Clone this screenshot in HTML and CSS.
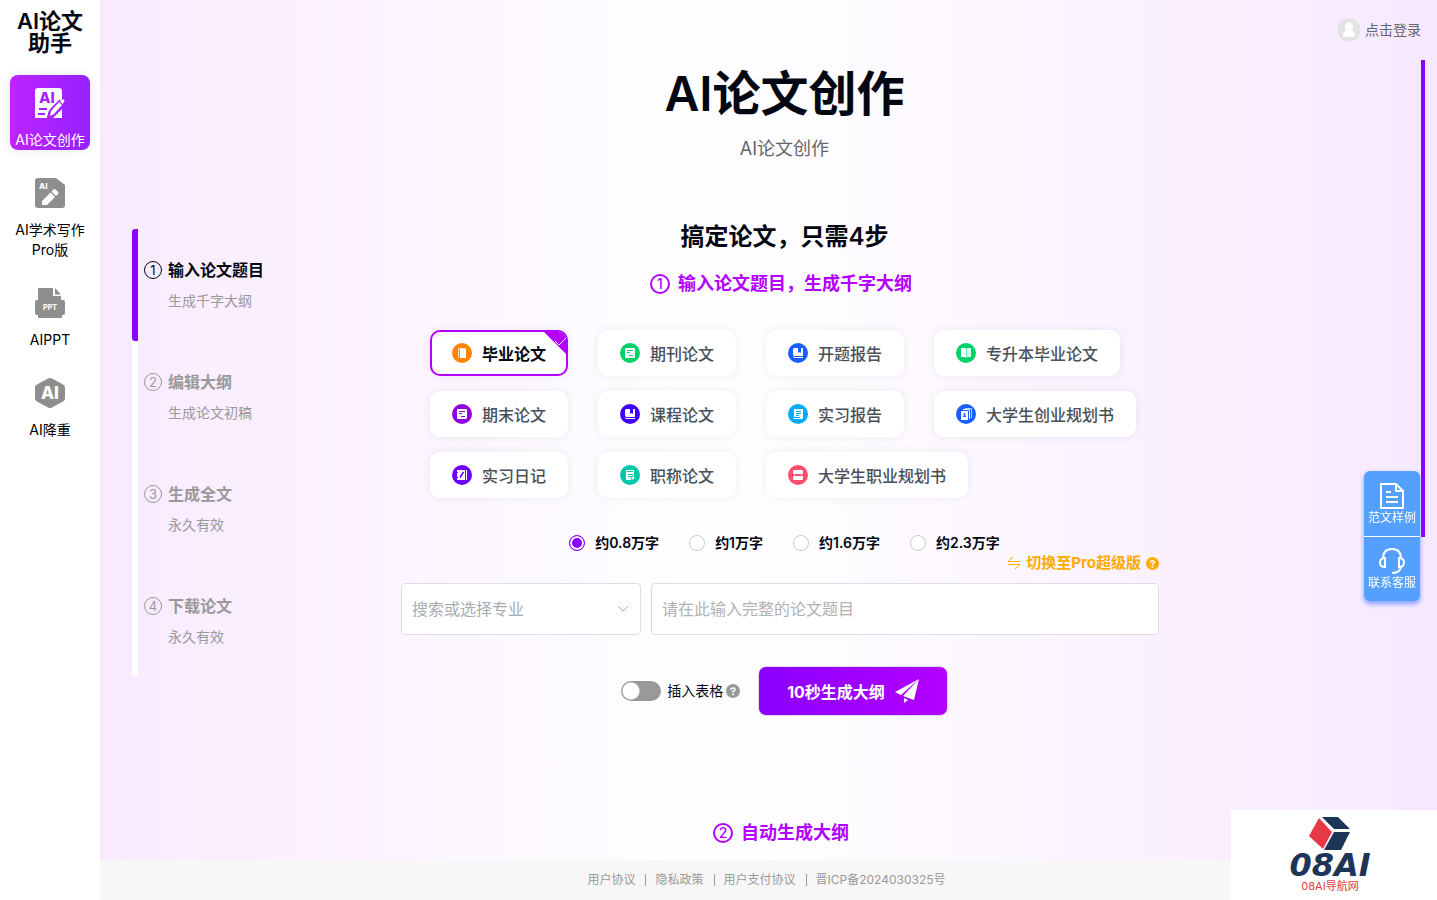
FILE: index.html
```html
<!DOCTYPE html>
<html lang="zh-CN">
<head>
    <meta charset="UTF-8">
    <meta name="viewport" content="width=device-width, initial-scale=1.0">
    <title>AI论文助手</title>
    <link rel="stylesheet" href="styles.css">
</head>
<body>
    <aside class="sidebar">
        <div class="brand">AI论文<br>助手</div>
        <nav class="menu">
            <a class="menu-item active" href="#">
                <svg width="30" height="30" viewBox="0 0 30 30">
                    <path fill="#fff" d="M3 0h21a3 3 0 0 1 3 3v8L14 23l-2 7H0V3a3 3 0 0 1 3-3z"/>
                    <path fill="#fff" d="M24 14l3 3-8 9-4 2 1-5zM25 13l2-1.500q1-.5 2 .5t0 2l-1.500 2zM20 28l7-7v9h-9z"/>
                    <path stroke="#ab22ff" stroke-width="2" d="M4 21h8M3 26h7"/>
                    <path stroke="#ab22ff" stroke-width="1.500" fill="none" d="M13 30c0-5 1-7 4-10l8-8"/>
                    <text x="4" y="15" font-size="15" font-weight="800" fill="#ab22ff">AI</text>
                </svg>
                <span>AI论文创作</span>
            </a>
            <a class="menu-item" href="#">
                <svg width="30" height="30" viewBox="0 0 30 30">
                    <path fill="#8e8e8e" d="M3 0h18l9 7v20q0 3-3 3H3q-3 0-3-3V3q0-3 3-3z"/>
                    <text x="4" y="11" font-size="8" font-weight="800" fill="#fff">AI</text>
                    <path fill="#fff" d="M7 23l8.500-8.500 4.500 4.500-8 8H7zM16.500 13.500l2-2q1-1 2 0l2.500 2.500q1 1 0 2l-2 2z"/>
                </svg>
                <span>AI学术写作<br>Pro版</span>
            </a>
            <a class="menu-item" href="#">
                <svg width="30" height="30" viewBox="0 0 30 30">
                    <path fill="#8e8e8e" d="M4 0h14v8h8v4h2q2 0 2 2v11q0 2-2 2h-1v3H3v-3H2q-2 0-2-2V14q0-2 2-2h1V1q0-1 1-1zM20 0l6 6.500h-6z"/>
                    <text x="15" y="22" font-size="7" font-weight="800" fill="#fff" text-anchor="middle">PPT</text>
                </svg>
                <span>AIPPT</span>
            </a>
            <a class="menu-item" href="#">
                <svg width="30" height="30" viewBox="0 0 30 30">
                    <path fill="#8e8e8e" d="M13 0.5q2-1 4 0l11 6q2 1 2 3v11q0 2-2 3l-11 6q-2 1-4 0l-11-6q-2-1-2-3v-11q0-2 2-3z"/>
                    <text x="15" y="21" font-size="17" font-weight="800" fill="#fff" text-anchor="middle">AI</text>
                </svg>
                <span>AI降重</span>
            </a>
        </nav>
    </aside>

    <div class="page">
        <header class="topbar">
            <a class="login" href="#">
                <svg width="24" height="24" viewBox="0 0 24 24">
                    <circle cx="12" cy="12" r="11.5" fill="#e3e3e3"/>
                    <circle cx="12" cy="8.500" r="4" fill="#fff"/>
                    <path fill="#fff" d="M6 18q0-6 6-6t6 6q0 1-1 1H7q-1 0-1-1z"/>
                </svg>
                <span>点击登录</span>
            </a>
        </header>

        <main class="content">
            <ol class="steps">
                <li class="step current">
                    <span class="num">1</span>
                    <h3>输入论文题目</h3>
                    <p>生成千字大纲</p>
                </li>
                <li class="step">
                    <span class="num">2</span>
                    <h3>编辑大纲</h3>
                    <p>生成论文初稿</p>
                </li>
                <li class="step">
                    <span class="num">3</span>
                    <h3>生成全文</h3>
                    <p>永久有效</p>
                </li>
                <li class="step">
                    <span class="num">4</span>
                    <h3>下载论文</h3>
                    <p>永久有效</p>
                </li>
            </ol>

            <div class="center">
                <h1>AI论文创作</h1>
                <p class="subtitle">AI论文创作</p>
                <h2>搞定论文，只需4步</h2>
                <h3 class="section-title"><span class="num">1</span>输入论文题目，生成千字大纲</h3>

                <div class="types">
                    <button class="type selected" type="button">
                        <svg width="20" height="20" viewBox="0 0 20 20"><circle cx="10" cy="10" r="10" fill="#ff8400"/><path fill="#fff" d="M8 6h6v9H8z"/><path fill="none" stroke="#ffe0bd" d="M6.500 15V5.500H14"/></svg>
                        毕业论文
                        <svg class="tick" width="24" height="24" viewBox="0 0 24 24"><path fill="#b300ff" d="M0 0h24v24z"/><path fill="none" stroke="#fff" d="M12 10l4 4 7-7"/></svg>
                    </button>
                    <button class="type" type="button">
                        <svg width="20" height="20" viewBox="0 0 20 20"><circle cx="10" cy="10" r="10" fill="#00d26a"/><rect x="5" y="5" width="10" height="10" rx="1" fill="#fff"/><path stroke="#00d26a" d="M7 7.500h6M7 9.500h3M9 12.500h4"/></svg>
                        期刊论文
                    </button>
                    <button class="type" type="button">
                        <svg width="20" height="20" viewBox="0 0 20 20"><circle cx="10" cy="10" r="10" fill="#1a5eff"/><path fill="#fff" d="M6 5h4v5l1.500-1 1.500 1V5h2v7H5V6z"/><path fill="none" stroke="#fff" d="M15 12.500H6q-1 1 0 2h9"/></svg>
                        开题报告
                    </button>
                    <button class="type" type="button">
                        <svg width="20" height="20" viewBox="0 0 20 20"><circle cx="10" cy="10" r="10" fill="#00d26a"/><path fill="#fff" d="M5 5h4q1 0 1 1v9q-1-1-2-1H5z"/><path fill="#d9ffeb" d="M10.500 6q0-1 1-1H15v9h-3q-1 0-1.500 1z"/></svg>
                        专升本毕业论文
                    </button>
                    <button class="type" type="button">
                        <svg width="20" height="20" viewBox="0 0 20 20"><circle cx="10" cy="10" r="10" fill="#9100dc"/><rect x="5" y="5" width="10" height="10" rx="1" fill="#fff"/><path stroke="#9100dc" d="M7 7.500h6M7 9.500h3M9 12.500h4"/></svg>
                        期末论文
                    </button>
                    <button class="type" type="button">
                        <svg width="20" height="20" viewBox="0 0 20 20"><circle cx="10" cy="10" r="10" fill="#4200ff"/><path fill="#fff" d="M6 5h4v5l1.500-1 1.500 1V5h2v7H5V6z"/><path fill="none" stroke="#fff" d="M15 12.500H6q-1 1 0 2h9"/></svg>
                        课程论文
                    </button>
                    <button class="type" type="button">
                        <svg width="20" height="20" viewBox="0 0 20 20"><circle cx="10" cy="10" r="10" fill="#00aaff"/><path fill="#fff" d="M6 5h9v9q0 1-1 1H6q-1 0-1-1h1z"/><path stroke="#00aaff" d="M8 7.500h5M8 9.500h5M8 11.500h3M5 13.500h7"/></svg>
                        实习报告
                    </button>
                    <button class="type" type="button">
                        <svg width="20" height="20" viewBox="0 0 20 20"><circle cx="10" cy="10" r="10" fill="#1a5eff"/><path fill="#fff" d="M5 7h7v9H5z"/><path fill="none" stroke="#fff" d="M7 5.500h6.500V15"/><path fill="none" stroke="#b8ceff" d="M9 4.500h6.500V14"/><circle cx="8.500" cy="10" r="1" fill="#1a5eff"/><path fill="#1a5eff" d="M7 13q0-2 1.500-2t1.500 2z"/></svg>
                        大学生创业规划书
                    </button>
                    <button class="type" type="button">
                        <svg width="20" height="20" viewBox="0 0 20 20"><circle cx="10" cy="10" r="10" fill="#6f00ff"/><path fill="#fff" d="M5 5h8v10H5z"/><path stroke="#fff" d="M14.500 5v10"/><path stroke="#6f00ff" stroke-width="1.500" d="M8 12.500l3.500-5.500"/><path stroke="#6f00ff" d="M4 7.500h2M4 12.500h2"/></svg>
                        实习日记
                    </button>
                    <button class="type" type="button">
                        <svg width="20" height="20" viewBox="0 0 20 20"><circle cx="10" cy="10" r="10" fill="#00c7a9"/><path fill="#fff" d="M6 5h8v7l-1 3H6z"/><path stroke="#00c7a9" d="M7 6.500h6M8 9.500h5M8 11.500h3"/><circle cx="13" cy="13" r="2" fill="#fff" stroke="#00c7a9"/></svg>
                        职称论文
                    </button>
                    <button class="type" type="button">
                        <svg width="20" height="20" viewBox="0 0 20 20"><circle cx="10" cy="10" r="10" fill="#ff4d6d"/><rect x="5" y="5" width="10" height="4" rx="1" fill="#fff"/><rect x="5" y="11" width="10" height="4" rx="1" fill="#fff"/><path stroke="#fff" stroke-opacity="0.5" d="M6.500 9v2M13.500 9v2"/></svg>
                        大学生职业规划书
                    </button>
                </div>

                <form class="paper-form">
                    <div class="counts">
                        <label><input type="radio" name="count" checked>约0.8万字</label>
                        <label><input type="radio" name="count">约1万字</label>
                        <label><input type="radio" name="count">约1.6万字</label>
                        <label><input type="radio" name="count">约2.3万字</label>
                    </div>
                    <a class="switch-pro" href="#">
                        <svg width="14" height="14" viewBox="0 0 14 14"><path fill="none" stroke="#ffab00" d="M6 1L1 5.500h12M1 8.500h12L8 13"/></svg>
                        <span>切换至Pro超级版</span>
                        <svg width="13" height="13" viewBox="0 0 14 14"><circle cx="7" cy="7" r="7" fill="#ffab00"/><path fill="none" stroke="#fff" stroke-width="1.500" d="M5 6q0-2 2-2t2 1.500Q9 7 7 7.500v1"/><circle cx="7" cy="10.500" r="1" fill="#fff"/></svg>
                    </a>
                    <div class="fields">
                        <select class="major" aria-label="专业">
                            <option>搜索或选择专业</option>
                        </select>
                        <input class="topic" type="text" aria-label="论文题目" placeholder="请在此输入完整的论文题目">
                    </div>
                    <div class="actions">
                        <label class="toggle">
                            <input type="checkbox">
                            <span>插入表格</span>
                            <svg width="14" height="14" viewBox="0 0 14 14"><circle cx="7" cy="7" r="7" fill="#999"/><path fill="none" stroke="#fff" stroke-width="1.500" d="M5 6q0-2 2-2t2 1.500Q9 7 7 7.500v1"/><circle cx="7" cy="10.500" r="1" fill="#fff"/></svg>
                        </label>
                        <button class="submit" type="button">
                            10秒生成大纲
                            <svg width="24" height="24" viewBox="0 0 24 24"><path fill="#fff" d="M24 0L0 13l6 3zM24 0L8 17l11 4zM9 19l4 2-4 3z"/></svg>
                        </button>
                    </div>
                </form>

                <h3 class="section-title"><span class="num">2</span>自动生成大纲</h3>
            </div>
        </main>

        <footer class="footer">
            <a href="#">用户协议</a><i></i><a href="#">隐私政策</a><i></i><a href="#">用户支付协议</a><i></i><a href="#">晋ICP备2024030325号</a>
        </footer>
    </div>

    <div class="scroll-thumb"></div>

    <div class="float-bar">
        <a href="#">
            <svg width="24" height="28" viewBox="0 0 24 28"><path fill="none" stroke="#fff" stroke-width="2" d="M1 2h15l7 7v17H1zM16 2v7h7M6 15h12M6 20h12M6 10h5"/></svg>
            <span>范文样例</span>
        </a>
        <a href="#">
            <svg width="26" height="28" viewBox="0 0 26 28"><path fill="none" stroke="#fff" stroke-width="2" d="M4 12q0-10 9-10t9 10M6 11v9q-5 0-5-4.500T6 11zM20 11v9q5 0 5-4.500T20 11zM22 20q-1 6-9 6"/></svg>
            <span>联系客服</span>
        </a>
    </div>

    <a class="partner" href="#">
        <svg width="42" height="34" viewBox="0 0 42 34">
            <path fill="#e63946" d="M10 1l13 14-9 17L0 19z"/>
            <path fill="#1d3557" d="M13 0h16l12 12H25zM25 15h16l-9 18H15z"/>
        </svg>
        <strong>08AI</strong>
        <span>08AI导航网</span>
    </a>
</body>
</html>
```
FILE: styles.css
```css
* {
    box-sizing: border-box;
}
body {
    margin: 0;
    height: 100vh;
    display: flex;
    overflow: hidden;
    font-family: Inter, "Noto Sans CJK SC", sans-serif;
    font-size: 14px;
    line-height: 20px;
    color: #030712;
}
h1, h2, h3, p, ol {
    margin: 0;
    padding: 0;
}
a {
    color: inherit;
    text-decoration: none;
}
button, input, select {
    font-family: inherit;
}
svg {
    flex-shrink: 0;
}

/* sidebar */
.sidebar {
    width: 100px;
    flex-shrink: 0;
    padding: 10px;
    background: #fff;
}
.brand {
    font-size: 22px;
    line-height: 22px;
    font-weight: 600;
    text-align: center;
}
.menu {
    display: flex;
    flex-direction: column;
    gap: 15px;
    margin-top: 21px;
}
.menu-item {
    display: flex;
    flex-direction: column;
    align-items: center;
    gap: 12px;
    padding-top: 13px;
    text-align: center;
    white-space: nowrap;
    color: #000;
}
.menu-item.active {
    border-radius: 8px;
    background: linear-gradient(to right, #bd24ff, #9421ff);
    box-shadow: 0 0 10px rgba(0, 0, 0, 0.1);
    color: #fff;
}

/* page */
.page {
    flex: 1;
    min-width: 0;
    display: flex;
    flex-direction: column;
    background: linear-gradient(to right, #f9eaff, #fefeff 43%, #fefcff 55%, #f7e8ff);
}
.topbar {
    height: 60px;
    display: flex;
    justify-content: flex-end;
    align-items: center;
    padding-right: 16px;
}
.login {
    display: flex;
    align-items: center;
    gap: 4px;
    color: #666;
}
.content {
    flex: 1;
    min-height: 0;
    overflow: auto;
    scrollbar-width: none;
    display: grid;
    grid-template-columns: 1fr 767px 1fr;
    align-items: start;
    padding-left: 32px;
}
.footer {
    height: 40px;
    display: flex;
    justify-content: center;
    align-items: center;
    gap: 10px;
    padding-right: 4px;
    background: #f7f7f7;
    color: #999;
    font-size: 12px;
}
.footer i {
    width: 1px;
    height: 12px;
    margin-right: -1px;
    background: #999;
}

/* steps */
.steps {
    width: 180px;
    margin-top: 169px;
    list-style: none;
    border-radius: 3px;
    background: linear-gradient(#fff, #fff) left / 6px 100% no-repeat;
}
.step {
    height: 112px;
    display: grid;
    grid-template-columns: 18px 1fr;
    column-gap: 6px;
    row-gap: 11px;
    align-content: start;
    align-items: center;
    padding: 31px 0 0 12px;
    color: #999;
}
.step.current {
    border-radius: 3px;
    background: linear-gradient(#8b00ff, #8b00ff) left / 6px 100% no-repeat;
}
.step h3 {
    font-size: 16px;
    line-height: 20px;
    font-weight: 700;
}
.step p {
    grid-column: 2;
}
.current h3, .current .num {
    color: #030712;
}
.num {
    width: 18px;
    height: 18px;
    display: flex;
    justify-content: center;
    align-items: center;
    border: 1px solid currentColor;
    border-radius: 50%;
    font-size: 13px;
    line-height: 16px;
    font-weight: 400;
}

/* center column */
.center {
    padding-bottom: 15px;
}
h1 {
    margin-top: 6px;
    font-size: 48px;
    line-height: 56px;
    font-weight: 600;
    text-align: center;
}
.subtitle {
    margin-top: 15px;
    font-size: 18px;
    line-height: 24px;
    text-align: center;
    color: #666;
}
h2 {
    margin-top: 60px;
    font-size: 24px;
    line-height: 32px;
    font-weight: 600;
    text-align: center;
}
.section-title {
    display: flex;
    justify-content: center;
    align-items: center;
    gap: 8px;
    margin-top: 19px;
    padding-right: 7px;
    font-size: 18px;
    line-height: 24px;
    font-weight: 600;
    color: #b300ff;
}
.section-title .num {
    width: 20px;
    height: 20px;
    border-width: 2px;
    font-size: 14px;
    font-weight: 500;
}
.types {
    display: flex;
    flex-wrap: wrap;
    gap: 15px 30px;
    margin-top: 34px;
    padding-left: 29px;
}
.type {
    position: relative;
    height: 46px;
    display: flex;
    align-items: center;
    gap: 10px;
    padding: 0 20px;
    border: 2px solid #fff;
    border-radius: 10px;
    background: #fff;
    box-shadow: 0 0 10px rgba(0, 0, 0, 0.07);
    overflow: hidden;
    font-size: 16px;
    font-weight: 500;
    color: #4b5057;
}
.type.selected {
    border-color: #b300ff;
    font-weight: 600;
    color: #030712;
}
.tick {
    position: absolute;
    top: -1px;
    right: -1px;
}

/* form */
.paper-form {
    margin: 35px 9px 105px 0;
}
.counts {
    display: flex;
    justify-content: center;
    gap: 30px;
    padding-left: 9px;
    font-weight: 600;
}
.counts label {
    display: flex;
    align-items: center;
    gap: 10px;
}
.counts input {
    appearance: none;
    width: 16px;
    height: 16px;
    margin: 0;
    border: 1px solid #ccc;
    border-radius: 50%;
    background: #fff;
}
.counts input:checked {
    border-color: #8b00ff;
    background: #8b00ff;
    box-shadow: inset 0 0 0 2px #fff;
}
.switch-pro {
    display: flex;
    justify-content: flex-end;
    align-items: center;
    gap: 5px;
    font-size: 15px;
    font-weight: 700;
    color: #ffab00;
}
.fields {
    display: flex;
    gap: 10px;
    margin-top: 10px;
}
.major, .topic {
    height: 52px;
    padding: 0 10px;
    border: 1px solid #dcdfe6;
    border-radius: 4px;
    background: #fff;
    font-size: 16px;
}
.major {
    appearance: none;
    width: 240px;
    color: #a8abb2;
    background: #fff url("data:image/svg+xml,%3Csvg xmlns='http://www.w3.org/2000/svg' width='12' height='8'%3E%3Cpath d='M1 1l5 5 5-5' fill='none' stroke='%23a8abb2'/%3E%3C/svg%3E") right 11px center no-repeat;
}
.topic {
    flex: 1;
    min-width: 0;
}
.topic::placeholder {
    color: #b2b2b2;
}
.actions {
    display: flex;
    justify-content: center;
    gap: 18px;
    margin-top: 31px;
    padding-left: 9px;
}
.toggle {
    display: flex;
    align-items: center;
    gap: 3px;
}
.toggle input {
    appearance: none;
    width: 40px;
    height: 20px;
    margin: 0 3px 0 0;
    border-radius: 10px;
    background: radial-gradient(circle at 10px 10px, #fff 8px, #999 9px);
}
.toggle input:checked {
    background: radial-gradient(circle at 30px 10px, #fff 8px, #8b00ff 9px);
}
.submit {
    height: 50px;
    display: flex;
    align-items: center;
    gap: 10px;
    padding: 0 28px;
    border: 1px solid #dcdfe6;
    border-radius: 8px;
    background: linear-gradient(to right, #8b00ff, #b300ff);
    font-size: 16px;
    font-weight: 700;
    color: #fff;
}

/* floating parts */
.scroll-thumb {
    position: fixed;
    top: 60px;
    right: 12px;
    width: 4px;
    height: 53vh;
    background: #8b00ff;
}
.float-bar {
    position: fixed;
    right: 17px;
    bottom: 299px;
    width: 56px;
    border-radius: 6px;
    background: #559fff;
    box-shadow: 0 3px 5px rgba(50, 110, 255, 0.6);
    font-size: 12px;
    line-height: 16px;
    color: #fff;
}
.float-bar a {
    height: 65px;
    display: flex;
    flex-direction: column;
    align-items: center;
    justify-content: center;
}
.float-bar a + a {
    border-top: 1px solid #fff;
}
.partner {
    position: fixed;
    right: 0;
    bottom: 0;
    width: 206px;
    height: 90px;
    display: flex;
    flex-direction: column;
    align-items: center;
    padding: 7px 8px 0 0;
    background: #fff;
    color: #1d3557;
}
.partner strong {
    font-family: "DejaVu Sans", sans-serif;
    font-size: 32px;
    line-height: 29px;
    font-style: italic;
}
.partner span {
    font-size: 11px;
    line-height: 12px;
    color: #e63946;
}
```
